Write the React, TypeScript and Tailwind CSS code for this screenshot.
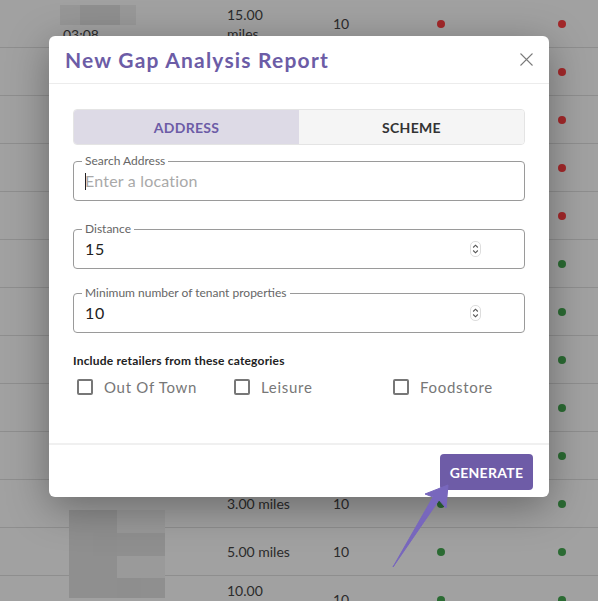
import React from 'react';

const font = { fontFamily: 'Lato, "Noto Sans", Arial, sans-serif' };

type Row = { miles?: string; count?: string; a?: 'r' | 'g'; b?: 'r' | 'g'; kind?: 'top' | 'redact' };

const rows: Row[] = [
  { miles: '15.00 miles', count: '10', a: 'r', b: 'r', kind: 'top' },
  { a: 'r', b: 'r' },
  { a: 'r', b: 'r' },
  { a: 'r', b: 'r' },
  { a: 'r', b: 'r' },
  { a: 'g', b: 'g' },
  { a: 'g', b: 'g' },
  { a: 'g', b: 'g' },
  { a: 'g', b: 'g' },
  { a: 'g', b: 'g' },
  { miles: '3.00 miles', count: '10', a: 'g', b: 'g' },
  { miles: '5.00 miles', count: '10', a: 'g', b: 'g', kind: 'redact' },
  { miles: '10.00 miles', count: '10', a: 'g', b: 'g' },
];

function Dot({ c }: { c?: 'r' | 'g' }) {
  if (!c) return <span className="w-2 h-2" />;
  return <span className={`w-2 h-2 rounded-full ${c === 'r' ? 'bg-[#a3282a]' : 'bg-[#2b6b33]'}`} />;
}

function Redacted() {
  const cells = [
    ['#8f8f8f', '#8f8f8f', '#999999', '#999999'],
    ['#8f8f8f', '#8e8e8e', '#8f8f8f', '#8f8f8f'],
    ['#8f8f8f', '#8f8f8f', '#9a9a9a', '#9a9a9a'],
    ['#8f8f8f', '#8f8f8f', '#8e8e8e', '#8f8f8f'],
  ];
  return (
    <div className="absolute left-[9px] top-[-18px] grid grid-cols-[24px_24px_24px_24px] grid-rows-[23px_23px_22px_20px]">
      {cells.flat().map((c, i) => (
        <div key={i} style={{ backgroundColor: c }} />
      ))}
    </div>
  );
}

function Background() {
  return (
    <div className="w-[598px] h-[601px] overflow-hidden bg-[#a1a1a1] text-[#2b2b2b] text-[14px]" style={font}>
      {rows.map((r, i) => (
        <div key={i} className="h-12 border-b border-[#8e8e8e] flex items-center">
          <div className="w-[60px]" />
          <div className="w-[167px] h-full relative">
            {r.kind === 'top' && (
              <>
                <div className="absolute left-0 top-[5px] flex h-5">
                  <div className="w-5 bg-[#979797]" />
                  <div className="w-10 bg-[#8f8f8f]" />
                  <div className="w-4 bg-[#989898]" />
                </div>
                <div className="absolute left-[3px] top-[24px]">03:08</div>
              </>
            )}
            {r.kind === 'redact' && <Redacted />}
          </div>
          <div className="w-[106px] leading-[19px] pr-[40px]">{r.miles}</div>
          <div className="w-[104px]">{r.count}</div>
          <Dot c={r.a} />
          <div className="w-[113px]" />
          <Dot c={r.b} />
        </div>
      ))}
    </div>
  );
}

function Field({ label, value, placeholder, spin, mt }: { label: string; value?: string; placeholder?: string; spin?: boolean; mt: string }) {
  return (
    <div className={`relative ${mt} h-[40px] border border-[#9a9a9a] rounded-[4px] flex items-center px-[11px]`}>
      <span className="absolute left-[8px] top-[-9px] px-[3px] bg-white text-[12px] leading-[16px] text-[#666]">{label}</span>
      {placeholder ? (
        <div className="flex items-center text-[16px] text-[#a9a9a9] tracking-[0.2px]">
          <span className="w-px h-[17px] bg-[#222] mr-[-1px]" />
          <span>{placeholder}</span>
        </div>
      ) : (
        <span className="text-[16px] text-[#222] tracking-[0.6px]">{value}</span>
      )}
      {spin && (
        <span className="ml-auto mr-[32px] w-[11px] h-[16px] border border-[#ddd] rounded-[5px] flex flex-col items-center justify-center">
          <svg width="7" height="12" viewBox="0 0 7 12" fill="none" stroke="#555" strokeWidth="1.1">
            <path d="M1.2 4.5 L3.5 2.2 L5.8 4.5" />
            <path d="M1.2 7.5 L3.5 9.8 L5.8 7.5" />
          </svg>
        </span>
      )}
    </div>
  );
}

function Check({ label, w }: { label: string; w: string }) {
  return (
    <div className={`flex items-center shrink-0 ${w}`}>
      <span className="w-[16px] h-[16px] border-2 border-[#777] rounded-[2px]" />
      <span className="ml-[11px] text-[15px] text-[#777] tracking-[0.7px]">{label}</span>
    </div>
  );
}

export default function App() {
  return (
    <div className="relative w-[598px] h-[601px] overflow-hidden" style={font}>
      <Background />
      <div className="absolute inset-0 flex justify-center items-start pt-[36px]">
        <div className="w-[500px] h-[461px] bg-white rounded-[6px] shadow-[0_10px_40px_rgba(0,0,0,0.35)] flex flex-col">
          <div className="h-[48px] flex items-center justify-between pl-[16px] pr-[15px] border-b border-[#ececec]">
            <h2 className="text-[21px] font-bold text-[#6c5ca6] tracking-[1.2px]">New Gap Analysis Report</h2>
            <svg width="15" height="15" viewBox="0 0 16 16" stroke="#7a7a7a" strokeWidth="1.5" strokeLinecap="round">
              <path d="M2 2 L14 14 M14 2 L2 14" />
            </svg>
          </div>
          <div className="flex-1 px-[24px] pt-[25px]">
            <div className="h-[36px] flex rounded-[4px] border border-[#e4e4e4] overflow-hidden text-[14px] font-bold tracking-[0.3px]">
              <div className="flex-1 bg-[#dddae6] text-[#6c5ca6] flex items-center justify-center">ADDRESS</div>
              <div className="flex-1 bg-[#f5f5f5] text-[#333] flex items-center justify-center">SCHEME</div>
            </div>
            <Field mt="mt-[16px]" label="Search Address" placeholder="Enter a location" />
            <Field mt="mt-[28px]" label="Distance" value="15" spin />
            <Field mt="mt-[24px]" label="Minimum number of tenant properties" value="10" spin />
            <div className="mt-[19px] text-[12px] font-bold text-[#222] tracking-[0.2px]">Include retailers from these categories</div>
            <div className="mt-[6px] flex pl-[4px]">
              <Check w="w-[157px]" label="Out Of Town" />
              <Check w="w-[159px]" label="Leisure" />
              <Check w="w-auto" label="Foodstore" />
            </div>
          </div>
          <div className="border-t-2 border-[#f0f0f0] flex justify-end pt-[9px] pb-[7px] pr-[16px]">
            <button className="w-[93px] h-[36px] rounded-[4px] bg-[#6e5ca7] text-white text-[14px] font-bold tracking-[0.3px]">GENERATE</button>
          </div>
        </div>
      </div>
      <svg className="absolute inset-0 pointer-events-none" width="598" height="601" viewBox="0 0 598 601">
        <path d="M393 567 L439 500 L446 508 L448 485 L425 494 L433 497 Z" fill="#7867bd" stroke="#7867bd" strokeWidth="1" strokeLinejoin="round" />
      </svg>
    </div>
  );
}
